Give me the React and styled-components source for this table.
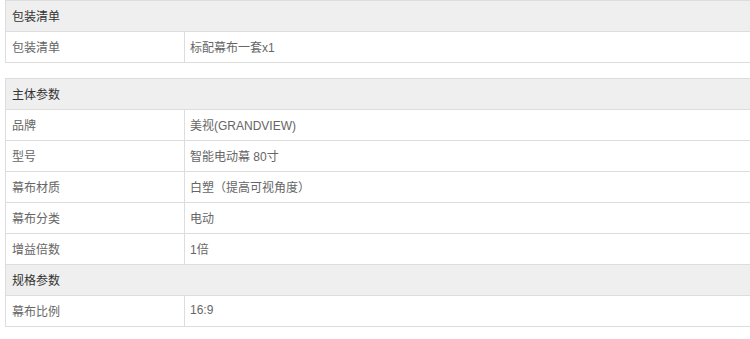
import styled, { createGlobalStyle } from "styled-components";

const GlobalStyle = createGlobalStyle`
  html, body {
    margin: 0;
    padding: 0;
    background: #fff;
    overflow: hidden;
  }
  body {
    font-family: "Liberation Sans", Arial, "Noto Sans CJK SC", sans-serif;
  }
`;

const Page = styled.div`
  width: 750px;
  height: 339px;
  overflow: hidden;
  padding-left: 5px;
  box-sizing: border-box;
  display: flex;
  flex-direction: column;
  gap: 15px;
`;

const Table = styled.table`
  width: 760px;
  border-collapse: collapse;
  table-layout: fixed;
  font-size: 12px;
`;

const Row = styled.tr``;

const GroupCell = styled.th`
  background: #efefef;
  border: 1px solid #dddddd;
  color: #333;
  font-weight: normal;
  text-align: left;
  padding: 0 0 2px 6px;
  height: 31px;
  box-sizing: border-box;
`;

const KeyCell = styled.td`
  border: 1px solid #dddddd;
  color: #666;
  padding: 0 0 2px 6px;
  height: 31px;
  box-sizing: border-box;
`;

const ValueCell = styled.td`
  border: 1px solid #dddddd;
  color: #666;
  padding: 0 0 2px 5px;
  height: 31px;
  box-sizing: border-box;
`;

const groups = [
  [
    { title: "包装清单", rows: [["包装清单", "标配幕布一套x1"]] },
  ],
  [
    {
      title: "主体参数",
      rows: [
        ["品牌", "美视(GRANDVIEW)"],
        ["型号", "智能电动幕 80寸"],
        ["幕布材质", "白塑（提高可视角度）"],
        ["幕布分类", "电动"],
        ["增益倍数", "1倍"],
      ],
    },
    { title: "规格参数", rows: [["幕布比例", "16:9"]] },
  ],
];

function SpecTable({ sections }) {
  return (
    <Table>
      <colgroup>
        <col style={{ width: 179 }} />
        <col />
      </colgroup>
      <tbody>
        {sections.map((s) => [
          <Row key={s.title}>
            <GroupCell colSpan={2}>{s.title}</GroupCell>
          </Row>,
          ...s.rows.map(([k, v]) => (
            <Row key={s.title + k}>
              <KeyCell>{k}</KeyCell>
              <ValueCell>{v}</ValueCell>
            </Row>
          )),
        ])}
      </tbody>
    </Table>
  );
}

export default function App() {
  return (
    <>
      <GlobalStyle />
      <Page>
        {groups.map((g, i) => (
          <SpecTable key={i} sections={g} />
        ))}
      </Page>
    </>
  );
}
